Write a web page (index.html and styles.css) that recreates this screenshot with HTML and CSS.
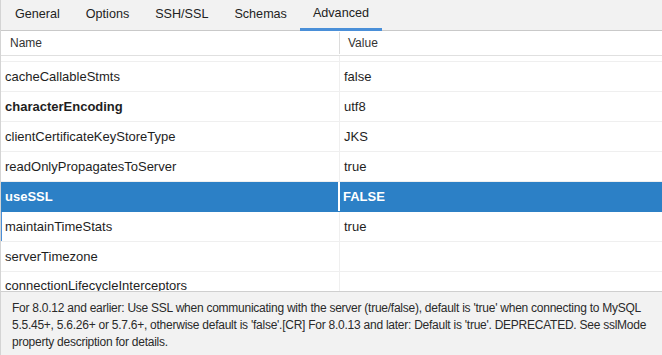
FILE: index.html
```html
<!DOCTYPE html>
<html>
<head>
<meta charset="utf-8">
<link rel="stylesheet" href="styles.css">
</head>
<body>
<div class="app">
  <div class="tabs">
    <div class="tab">General</div>
    <div class="tab">Options</div>
    <div class="tab">SSH/SSL</div>
    <div class="tab">Schemas</div>
    <div class="tab active">Advanced</div>
  </div>
  <div class="table">
    <div class="head">
      <div class="hname">Name</div>
      <div class="hval">Value</div>
    </div>
    <div class="row partial"><div class="c1"></div><div class="c2"></div></div>
    <div class="row"><div class="c1">cacheCallableStmts</div><div class="c2">false</div></div>
    <div class="row"><div class="c1 bold">characterEncoding</div><div class="c2">utf8</div></div>
    <div class="row"><div class="c1">clientCertificateKeyStoreType</div><div class="c2">JKS</div></div>
    <div class="row"><div class="c1">readOnlyPropagatesToServer</div><div class="c2">true</div></div>
    <div class="row selected"><div class="c1 bold">useSSL</div><div class="c2 bold">FALSE</div></div>
    <div class="row focus"><div class="c1">maintainTimeStats</div><div class="c2">true</div></div>
    <div class="row"><div class="c1">serverTimezone</div><div class="c2"></div></div>
    <div class="row cut"><div class="c1">connectionLifecycleInterceptors</div><div class="c2"></div></div>
  </div>
  <div class="desc">
    For 8.0.12 and earlier: Use SSL when communicating with the server (true/false), default is 'true' when connecting to MySQL<br>
    5.5.45+, 5.6.26+ or 5.7.6+, otherwise default is 'false'.[CR] For 8.0.13 and later: Default is 'true'. DEPRECATED. See sslMode<br>
    property description for details.
  </div>
</div>
</body>
</html>
```

FILE: styles.css
```css
html, body {
  margin: 0;
  padding: 0;
  background: #ffffff;
}
body {
  font-family: "Liberation Sans", Arial, sans-serif;
  color: #1e1e1e;
  width: 662px;
  height: 355px;
  overflow: hidden;
}
.app {
  display: flex;
  flex-direction: column;
  height: 355px;
  border-left: 1px solid #d4d4d4;
  box-sizing: border-box;
}
.tabs {
  display: flex;
  height: 31px;
  background: #f2f2f2;
  border-bottom: 1px solid #c9c9c9;
  box-sizing: border-box;
  padding-left: 1px;
}
.tab {
  padding: 0 13px;
  font-size: 12.6px;
  line-height: 28px;
  color: #222;
  border-bottom: 2px solid transparent;
  margin-bottom: -1px;
}
.tab.active {
  border-bottom: 3px solid #4a8fd8;
  line-height: 27px;
}
.table {
  flex: 1;
  overflow: hidden;
  display: flex;
  flex-direction: column;
}
.head {
  display: flex;
  height: 25px;
  flex: none;
  border-bottom: 1px solid #e0e0e0;
  box-sizing: border-box;
  font-size: 12px;
  color: #333;
  align-items: center;
}
.hname {
  width: 339px;
  padding-left: 9px;
  box-sizing: border-box;
  height: 22px;
  line-height: 22px;
  border-right: 1px solid #dcdcdc;
}
.hval {
  padding-left: 8px;
  line-height: 22px;
}
.row {
  display: flex;
  flex: none;
  height: 30px;
  border-bottom: 1px solid #efefef;
  box-sizing: border-box;
  font-size: 13px;
  line-height: 29px;
}
.row.partial {
  height: 6px;
}
.row.cut {
  height: 19px;
  border-bottom: none;
  line-height: 28px;
  align-items: flex-start;
}
.c1 {
  width: 339px;
  padding-left: 4px;
  box-sizing: border-box;
  border-right: 1px solid #efefef;
  white-space: nowrap;
  overflow: hidden;
}
.c2 {
  padding-left: 4px;
  flex: 1;
}
.bold {
  font-weight: bold;
}
.row.selected {
  background: #2c80c6;
  color: #ffffff;
  border-bottom-color: #2c80c6;
}
.row.selected .c1 {
  border-right: 2px solid #ffffff;
}
.row.selected .c2 {
  padding-left: 3px;
}
.row.focus {
  box-shadow: inset 1px 0 0 #4a8fd8;
}
.desc {
  flex: none;
  height: 64px;
  background: #f2f2f2;
  border-top: 1px solid #cfcfcf;
  box-sizing: border-box;
  padding: 8px 0 0 11px;
  font-size: 12px;
  line-height: 17px;
  color: #2a2a2a;
  white-space: nowrap;
  letter-spacing: -0.25px;
}
```
